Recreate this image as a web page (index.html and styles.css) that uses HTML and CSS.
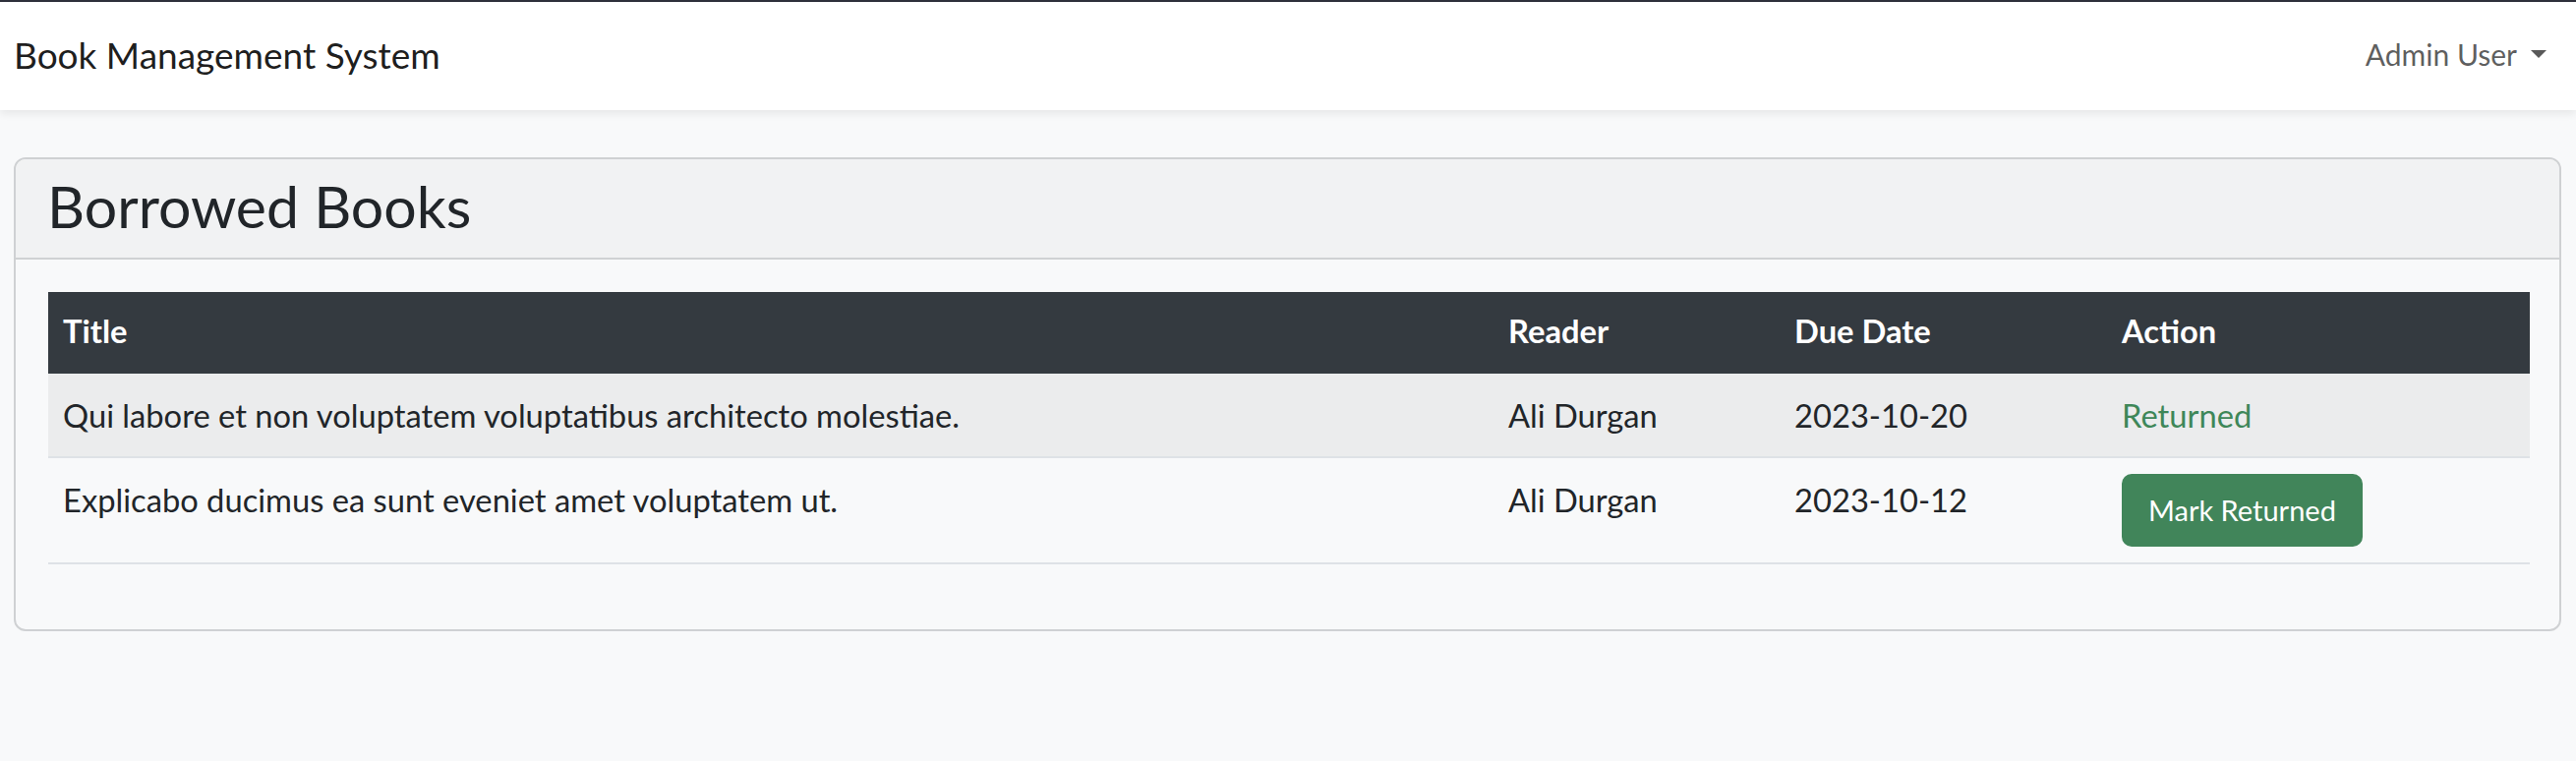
FILE: index.html
```html
<!DOCTYPE html>
<html lang="en">
<head>
<meta charset="utf-8">
<title>Book Management System</title>
<link rel="stylesheet" href="styles.css">
</head>
<body>
<nav class="navbar">
  <span class="brand">Book Management System</span>
  <a class="user-menu">Admin User<span class="caret"></span></a>
</nav>
<main class="content">
  <section class="card">
    <header class="card-header">
      <h3 class="card-title">Borrowed Books</h3>
    </header>
    <div class="card-body">
      <table class="table">
        <colgroup>
          <col class="col-title">
          <col class="col-reader">
          <col class="col-due">
          <col class="col-action">
        </colgroup>
        <thead>
          <tr class="head-row"><th>Title</th><th>Reader</th><th>Due Date</th><th>Action</th></tr>
        </thead>
        <tbody>
          <tr class="row-striped">
            <td>Qui labore et non voluptatem voluptatibus architecto molestiae.</td>
            <td>Ali Durgan</td>
            <td>2023-10-20</td>
            <td><span class="returned">Returned</span></td>
          </tr>
          <tr class="row-plain">
            <td>Explicabo ducimus ea sunt eveniet amet voluptatem ut.</td>
            <td>Ali Durgan</td>
            <td>2023-10-12</td>
            <td class="cell-button"><button class="btn-success" type="button">Mark Returned</button></td>
          </tr>
        </tbody>
      </table>
    </div>
  </section>
</main>
</body>
</html>
```
FILE: styles.css
```css
html, body {
  margin: 0;
  padding: 0;
}
body {
  background: #f8f9fa;
  color: #212529;
  font-family: Lato, "Noto Sans", "Liberation Sans", sans-serif;
  font-size: 33px;
}
.navbar {
  height: 106px;
  background: #ffffff;
  border-top: 2px solid #2e303b;
  box-shadow: 0 4px 8px rgba(0, 0, 0, 0.07);
  display: flex;
  align-items: center;
  justify-content: space-between;
  padding: 0 30px 4px 14px;
  position: relative;
}
.brand {
  font-size: 37px;
  color: rgba(0, 0, 0, 0.9);
}
.user-menu {
  font-size: 30px;
  color: rgba(0, 0, 0, 0.65);
  display: flex;
  align-items: center;
}
.caret {
  width: 0;
  height: 0;
  border-top: 8px solid currentColor;
  border-left: 8px solid transparent;
  border-right: 8px solid transparent;
  margin-left: 14px;
}
.content {
  padding: 48px 15px 0 14px;
}
.card {
  border: 2px solid #cfd1d3;
  border-radius: 12px;
  overflow: hidden;
}
.card-header {
  background: #f1f2f3;
  border-bottom: 2px solid #cfd1d3;
  padding: 14px 32px 18px;
}
.card-title {
  margin: 0;
  font-size: 59px;
  font-weight: 400;
  line-height: 68px;
}
.card-body {
  padding: 33px;
}
.table {
  width: 100%;
  table-layout: fixed;
  border-collapse: collapse;
  margin-bottom: 33px;
  font-size: 32.7px;
}
.col-title { width: 1470px; }
.col-reader { width: 291px; }
.col-due { width: 333px; }
.col-action { width: 430px; }
.table th,
.table td {
  padding: 16px 17px 16px 15px;
  text-align: left;
  vertical-align: top;
  line-height: 48px;
}
.table td {
  padding-top: 19px;
  padding-bottom: 13px;
}
.table td.cell-button {
  padding-top: 16px;
  padding-bottom: 16px;
}
.table th {
  font-weight: 700;
}
.head-row {
  height: 83px;
  background: #343a40;
  color: #ffffff;
}
.row-striped {
  height: 85px;
  background: #ebeced;
  border-bottom: 2px solid #dee2e6;
}
.row-plain {
  border-bottom: 2px solid #dee2e6;
}
.returned {
  color: #3e8759;
}
.btn-success {
  font-family: inherit;
  font-size: 29px;
  line-height: 1.5;
  color: #ffffff;
  background: #41855a;
  border: 2px solid #41855a;
  border-radius: 10px;
  padding: 13px 25px;
  display: block;
}
```
